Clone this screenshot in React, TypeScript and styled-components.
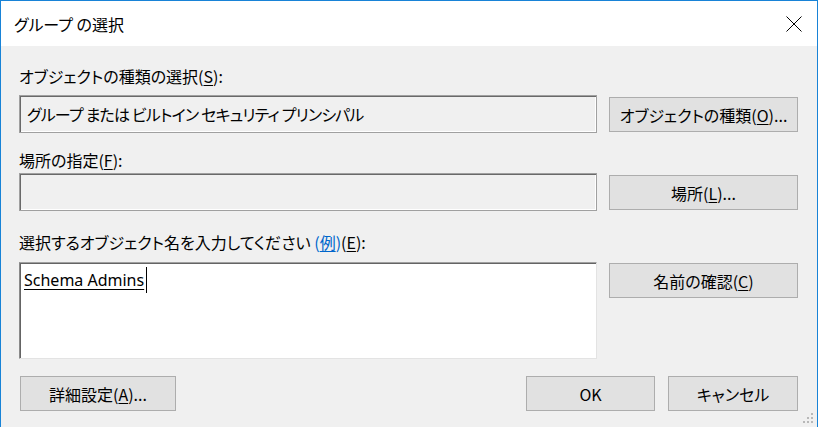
import React from 'react';
import styled, { createGlobalStyle } from 'styled-components';

const GlobalStyle = createGlobalStyle`
  html, body {
    margin: 0;
    padding: 0;
    background: #ffffff;
  }
  body {
    font-family: "Noto Sans CJK JP", "Noto Sans", sans-serif;
    font-feature-settings: "palt";
  }
`;

const Window = styled.div`
  width: 818px;
  height: 427px;
  box-sizing: border-box;
  border: 1px solid #1883d7;
  border-bottom: none;
  display: flex;
  flex-direction: column;
  overflow: hidden;
`;

const TitleBar = styled.div`
  height: 45px;
  flex: none;
  background: #ffffff;
  display: flex;
  align-items: center;
  justify-content: space-between;
  padding-left: 13px;
`;

const Title = styled.span`
  font-size: 16px;
  color: #000000;
`;

const CloseButton = styled.div`
  width: 46px;
  height: 45px;
  display: flex;
  align-items: center;
  justify-content: center;
`;

const Body = styled.div`
  flex: 1;
  position: relative;
  background: #f0f0f0;
  padding: 20px 19px 0 18px;
  display: flex;
  flex-direction: column;
`;

const Label = styled.div<{ $top?: number }>`
  height: 20px;
  line-height: 20px;
  font-size: 16px;
  color: #000000;
  margin-top: ${(p) => p.$top ?? 0}px;
  white-space: nowrap;
`;

const Key = styled.span`
  text-decoration: underline;
  text-underline-offset: 2px;
`;

const Link = styled.span`
  color: #0066cc;
`;

const Row = styled.div<{ $top?: number }>`
  display: grid;
  grid-template-columns: 1fr 189px;
  column-gap: 12px;
  align-items: start;
  margin-top: ${(p) => p.$top ?? 0}px;
`;

const Field = styled.div`
  height: 38px;
  box-sizing: border-box;
  border: 1px solid #a0a0a0;
  box-shadow: inset 1px 1px 0 #696969, inset -1px -1px 0 #ffffff;
  padding-left: 7px;
  display: flex;
  align-items: center;
  font-size: 16px;
  letter-spacing: -0.8px;
  color: #000000;
  white-space: nowrap;
`;

const NameArea = styled.div`
  height: 97px;
  box-sizing: border-box;
  background: #ffffff;
  border: 1px solid;
  border-color: #a0a0a0 #e3e3e3 #e3e3e3 #8a8a8a;
  box-shadow: inset 1px 1px 0 #646464;
  padding: 4px 0 0 4px;
  display: flex;
  align-items: flex-start;
`;

const ResolvedName = styled.span`
  font-family: "Noto Sans", sans-serif;
  font-size: 16px;
  line-height: 26px;
  color: #000000;
  text-decoration: underline;
  text-underline-offset: 3px;
  border-right: 1px solid #000000;
  padding-right: 2px;
`;

const Button = styled.div<{ $top?: number; $width?: number }>`
  height: 35px;
  box-sizing: border-box;
  ${(p) => (p.$width ? `width: ${p.$width}px;` : '')}
  margin-top: ${(p) => p.$top ?? 0}px;
  background: #e1e1e1;
  border: 1px solid #adadad;
  display: flex;
  align-items: center;
  justify-content: center;
  font-size: 16px;
  color: #000000;
  white-space: nowrap;
`;

const Footer = styled.div`
  display: flex;
  align-items: center;
  margin-top: 17px;
  padding-left: 1px;
  gap: 13px;
`;

const Spacer = styled.div`
  flex: 1;
`;

const Grip = styled.svg`
  position: absolute;
  right: 3px;
  bottom: 3px;
`;

const CloseIcon = () => (
  <svg width="16" height="16" viewBox="0 0 16 16">
    <path d="M0.5 0.5 L15.5 15.5 M15.5 0.5 L0.5 15.5" stroke="#000" strokeWidth="1" fill="none" />
  </svg>
);

const SizeGrip = () => (
  <Grip width="12" height="12" viewBox="0 0 12 12">
    <g fill="#b8b8b8">
      <rect x="9" y="1" width="2" height="2" />
      <rect x="5" y="5" width="2" height="2" />
      <rect x="9" y="5" width="2" height="2" />
      <rect x="1" y="9" width="2" height="2" />
      <rect x="5" y="9" width="2" height="2" />
      <rect x="9" y="9" width="2" height="2" />
    </g>
  </Grip>
);

export default function App() {
  return (
    <>
      <GlobalStyle />
      <Window>
        <TitleBar>
          <Title>グループ の選択</Title>
          <CloseButton>
            <CloseIcon />
          </CloseButton>
        </TitleBar>
        <Body>
          <Label>
            オブジェクトの種類の選択(<Key>S</Key>):
          </Label>
          <Row $top={9}>
            <Field>グループ または ビルトイン セキュリティ プリンシパル</Field>
            <Button $top={2}>
              オブジェクトの種類(<Key>O</Key>)...
            </Button>
          </Row>

          <Label $top={17}>
            場所の指定(<Key>F</Key>):
          </Label>
          <Row $top={3}>
            <Field />
            <Button $top={2}>
              場所(<Key>L</Key>)...
            </Button>
          </Row>

          <Label $top={21}>
            選択するオブジェクト名を入力してください <Link>(<Key>例</Key>)</Link>(<Key>E</Key>):
          </Label>
          <Row $top={10}>
            <NameArea>
              <ResolvedName>Schema Admins</ResolvedName>
            </NameArea>
            <Button $top={1}>
              名前の確認(<Key>C</Key>)
            </Button>
          </Row>

          <Footer>
            <Button $width={156}>
              詳細設定(<Key>A</Key>)...
            </Button>
            <Spacer />
            <Button $width={129}>OK</Button>
            <Button $width={130}>キャンセル</Button>
          </Footer>
          <SizeGrip />
        </Body>
      </Window>
    </>
  );
}
